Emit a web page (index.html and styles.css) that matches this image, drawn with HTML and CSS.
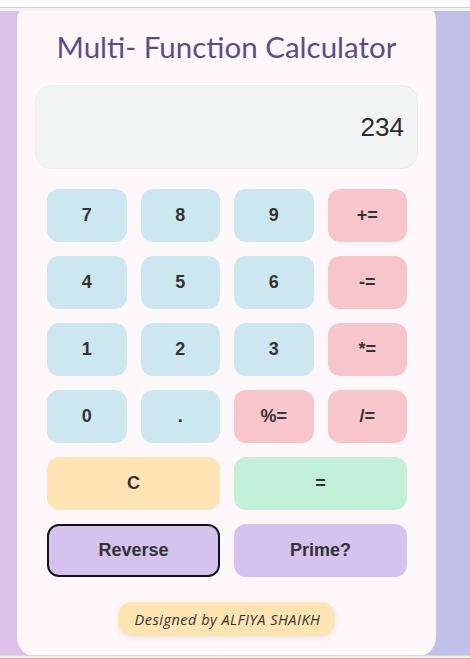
FILE: index.html
```html
<!DOCTYPE html>
<html lang="en">
<head>
<meta charset="UTF-8">
<title>Multi- Function Calculator</title>
<link rel="stylesheet" href="styles.css">
</head>
<body>
<div class="topbar"></div>
<div class="stage">
  <main class="card">
    <h1 class="title">Multi- Function Calculator</h1>
    <div class="display">234</div>
    <div class="keys">
      <button class="key num">7</button>
      <button class="key num">8</button>
      <button class="key num">9</button>
      <button class="key op">+=</button>
      <button class="key num">4</button>
      <button class="key num">5</button>
      <button class="key num">6</button>
      <button class="key op">-=</button>
      <button class="key num">1</button>
      <button class="key num">2</button>
      <button class="key num">3</button>
      <button class="key op">*=</button>
      <button class="key num">0</button>
      <button class="key num">.</button>
      <button class="key op">%=</button>
      <button class="key op">/=</button>
      <button class="key clear wide">C</button>
      <button class="key equals wide">=</button>
      <button class="key special wide focused">Reverse</button>
      <button class="key special wide">Prime?</button>
    </div>
    <footer class="credit">Designed by ALFIYA SHAIKH</footer>
  </main>
</div>
<div class="bottombar"></div>
</body>
</html>
```

FILE: styles.css
```css
* { box-sizing: border-box; }

html, body {
  margin: 0;
  padding: 0;
  width: 470px;
  height: 659px;
  overflow: hidden;
  background: #fafafa;
}

.topbar {
  height: 11px;
  background: #f7f7f7;
  border-top: 7px solid #fcfcfc;
  border-bottom: 3px solid #f3f3f3;
  box-shadow: inset 0 1px 0 #d3d3d3;
}

.stage {
  height: 644px;
  overflow: hidden;
  background: linear-gradient(90deg, #dcc2e8 0%, #cfc0e8 50%, #c0bfe8 100%);
}

.card {
  width: 419px;
  margin: -10px 0 0 17px;
  padding: 28px 18px 21px;
  background: #fff8fa;
  border-radius: 20px;
  display: flex;
  flex-direction: column;
  align-items: center;
}

.title {
  margin: 0;
  font-family: Lato, "Noto Sans", sans-serif;
  font-weight: 400;
  font-size: 29.5px;
  line-height: 36px;
  color: #5a4d8c;
  text-align: center;
}

.display {
  align-self: stretch;
  margin-top: 20px;
  height: 84px;
  padding: 0 13px;
  background: #f2f3f3;
  border: 1px solid #ebecec;
  border-radius: 16px;
  display: flex;
  align-items: center;
  justify-content: flex-end;
  font-family: "Liberation Sans", Arial, sans-serif;
  font-size: 26px;
  color: #2b2b2b;
}

.keys {
  align-self: stretch;
  margin: 20px 11px 0 12px;
  display: grid;
  grid-template-columns: repeat(4, 1fr);
  grid-auto-rows: 53px;
  gap: 14px;
}

.key {
  border: none;
  border-radius: 12px;
  font-family: "Liberation Sans", Arial, sans-serif;
  font-weight: 700;
  font-size: 18px;
  color: #333;
  padding: 0;
}

.wide { grid-column: span 2; }

.num { background: #cde7f0; }
.op { background: #f7c6cd; }
.clear { background: #ffe5b4; }
.equals { background: #c3f0d8; }
.special { background: #d5c2ef; }

.focused { border: 2px solid #141414; }

.credit {
  margin-top: 25px;
  height: 34px;
  padding: 0 15px 0 17px;
  display: flex;
  align-items: center;
  background: #ffe5b4;
  border-radius: 14px;
  box-shadow: 0 2px 6px rgba(0, 0, 0, 0.08);
  font-family: "Open Sans", "Noto Sans", sans-serif;
  font-style: italic;
  font-size: 14.5px;
  letter-spacing: 0.5px;
  color: #333;
}

.bottombar {
  height: 4px;
  background: #efefef;
  border-top: 1px solid #d8d8d8;
  border-bottom: 1px solid #c9b8a8;
}
```
